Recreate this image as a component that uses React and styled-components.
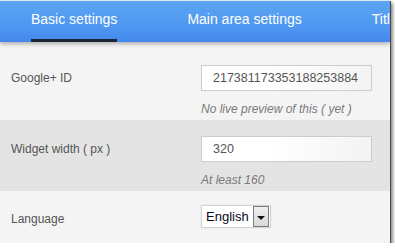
import React from 'react'
import styled, { createGlobalStyle } from 'styled-components'

const Global = createGlobalStyle`
  html, body {
    margin: 0;
    padding: 0;
    background: #ffffff;
  }
  body {
    font-family: "Liberation Sans", Arial, sans-serif;
  }
`;

const Window = styled.div`
  width: 390px;
  height: 243px;
  overflow: hidden;
  background: #f4f4f4;
  box-shadow: 1px 1px 0 #4a4a4a, 3px 3px 3px rgba(0, 0, 0, 0.45);
  display: flex;
  flex-direction: column;
`;

const TabBar = styled.div`
  position: relative;
  z-index: 1;
  height: 41px;
  border-top: 1px solid #dfe6ee;
  background: linear-gradient(#5ba5f2, #4f97f0 65%, #4387ef);
  box-shadow: 0 2px 4px rgba(0, 0, 0, 0.28);
  display: flex;
  gap: 70px;
  padding-left: 31px;
  white-space: nowrap;
  flex-shrink: 0;
`;

const Tab = styled.div`
  box-sizing: border-box;
  height: 41px;
  padding-top: 10px;
  font-size: 14px;
  line-height: 16px;
  color: #ffffff;
  border-bottom: 3px solid ${p => (p.$active ? '#1e2432' : 'transparent')};
`;

const Body = styled.div`
  padding-top: 7px;
  display: flex;
  flex-direction: column;
`;

const Row = styled.div`
  display: grid;
  grid-template-columns: 201px 171px;
  padding: ${p => p.$pad || '16px 0 4px'};
  background: ${p => (p.$shade ? '#e4e4e4' : '#f4f4f4')};
`;

const Label = styled.div`
  padding-left: 11px;
  font-size: 12px;
  color: #555555;
  height: ${p => p.$h || 26}px;
  display: flex;
  align-items: center;
`;

const Field = styled.div`
  display: flex;
  flex-direction: column;
  align-items: flex-start;
`;

const Input = styled.div`
  box-sizing: border-box;
  width: 171px;
  height: 26px;
  border: 1px solid #cccccc;
  background: linear-gradient(100deg, #ffffff 40%, #f3f3f3);
  padding-left: 11px;
  font-size: 12.5px;
  line-height: 24px;
  color: #555555;
`;

const Hint = styled.div`
  margin-top: 11px;
  font-size: 12px;
  line-height: 14px;
  font-style: italic;
  color: #7a7a7a;
`;

const Select = styled.div`
  box-sizing: border-box;
  height: 23px;
  width: 70px;
  border: 1px solid #d4d4d4;
  background: #ffffff;
  box-shadow: 0 0 1px rgba(0, 0, 0, 0.15);
  display: flex;
  align-items: center;
  justify-content: space-between;
  padding: 0 1px 0 4px;
  font-size: 13px;
  color: #0a0a1e;
`;

const Arrow = styled.div`
  box-sizing: border-box;
  width: 16px;
  height: 21px;
  border: 1px solid #7a7a7a;
  background: linear-gradient(#f0f0f0, #d8d8d8);
  display: flex;
  align-items: center;
  justify-content: center;
  &::after {
    content: '';
    border-left: 4px solid transparent;
    border-right: 4px solid transparent;
    border-top: 4px solid #111111;
    margin-top: 2px;
  }
`;

const App = () => {
  return (
    <>
      <Global />
      <Window>
        <TabBar>
          <Tab $active>Basic settings</Tab>
          <Tab>Main area settings</Tab>
          <Tab>Title settings</Tab>
        </TabBar>
        <Body>
          <Row>
            <Label>Google+ ID</Label>
            <Field>
              <Input>217381173353188253884</Input>
              <Hint>No live preview of this ( yet )</Hint>
            </Field>
          </Row>
          <Row $shade>
            <Label>Widget width ( px )</Label>
            <Field>
              <Input>320</Input>
              <Hint>At least 160</Hint>
            </Field>
          </Row>
          <Row $pad="14px 0 20px">
            <Label $h={27}>Language</Label>
            <Field>
              <Select>
                English
                <Arrow />
              </Select>
            </Field>
          </Row>
        </Body>
      </Window>
    </>
  )
}

export default App
